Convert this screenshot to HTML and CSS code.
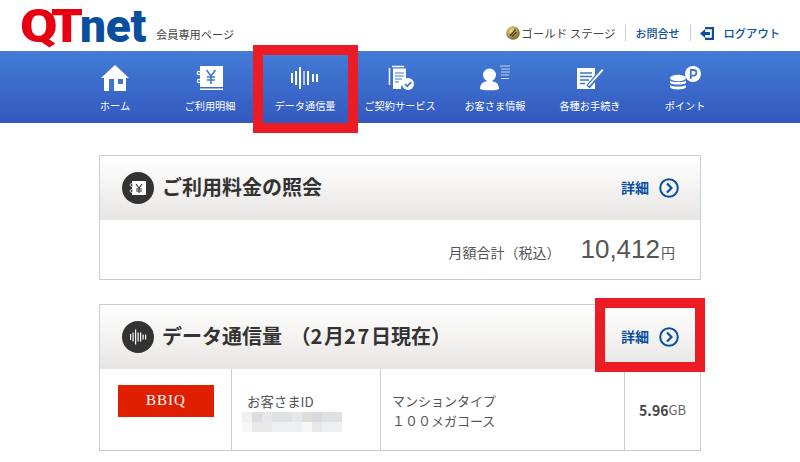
FILE: index.html
```html
<!DOCTYPE html>
<html lang="ja">
<head>
<meta charset="utf-8">
<title>QTnet 会員専用ページ</title>
<link rel="stylesheet" href="styles.css">
</head>
<body>
<header class="top">
  <div class="brand">
    <div class="logo"><span class="logo-q">Q</span><span class="logo-t">T</span><span class="logo-net">net</span></div>
    <span class="brand-sub">会員専用ページ</span>
  </div>
  <div class="util">
    <span class="stage">
      <svg class="coin" viewBox="0 0 14 14"><defs><radialGradient id="g" cx=".4" cy=".35" r=".7"><stop offset="0" stop-color="#f0dc8c"/><stop offset=".6" stop-color="#a8924c"/><stop offset="1" stop-color="#6d5f2c"/></radialGradient></defs><circle cx="7" cy="7" r="6.800" fill="url(#g)"/><path d="M4 10 9.500 3.500M6 10.500 10.500 6" stroke="#4a4020" stroke-width="1.300" fill="none"/></svg>
      <span>ゴールド ステージ</span>
    </span>
    <a class="util-link contact">お問合せ</a>
    <a class="util-link logout">
      <svg class="logout-icon" viewBox="0 0 15 15"><path d="M5 1h9v13H5v-2.200h6.800V3.200H5z" fill="#0a4f9e"/><path d="M0 7.500 5.200 3v3H10v3H5.200v3z" fill="#0a4f9e"/></svg>
      <span>ログアウト</span>
    </a>
  </div>
</header>

<nav class="nav">
  <a class="nav-item">
    <svg class="nav-icon" viewBox="0 0 32 26"><path d="M16 0 30 13h-3v13H5V13H2z" fill="#fff"/><path d="M10 14h5v12h-5zM19 14h5v5h-5z" fill="#3f74cf"/></svg>
    <span>ホーム</span>
  </a>
  <a class="nav-item">
    <svg class="nav-icon" viewBox="0 0 32 26"><path d="M6 1h23v21H6z" fill="#fff"/><path d="M6 23.500h23v1.500H6z" fill="#fff"/><path d="M12.500 5l4.500 6 4.500-6M17 11v8M13 12h8M13 15h8" stroke="#3f74cf" stroke-width="1.600" fill="none"/><g fill="none" stroke="#fff" stroke-width="1.200"><circle cx="5" cy="8" r="1.700" fill="#3f74cf"/><circle cx="5" cy="16" r="1.700" fill="#3f74cf"/></g></svg>
    <span>ご利用明細</span>
  </a>
  <a class="nav-item">
    <svg class="nav-icon" viewBox="0 0 32 26"><g fill="#fff"><rect x="2" y="8" width="2" height="10"/><rect x="6" y="6" width="2" height="14"/><rect x="10" y="2" width="2" height="22"/><rect x="14" y="6" width="2" height="14" opacity=".6"/><rect x="18" y="6" width="2" height="14"/><rect x="23" y="9" width="2" height="8"/><rect x="27" y="9" width="2" height="8"/></g></svg>
    <span>データ通信量</span>
  </a>
  <a class="nav-item">
    <svg class="nav-icon" viewBox="0 0 32 26"><g fill="none" stroke="#fff"><path d="M5.500 3v17" stroke-width="1.500"/><path d="M8 1.500h12" stroke-width="1.500"/></g><path d="M9 3.500h13v13.500a7 7 0 0 0-5 7h-8z" fill="#fff"/><g stroke="#3f74cf" stroke-width="1.200"><path d="M11 8h9M11 11h9M11 14h7M11 17h4"/></g><circle cx="24" cy="19" r="6" fill="#fff"/><path d="M21 19l2.200 2.200 4-4" stroke="#3f74cf" stroke-width="1.700" fill="none"/></svg>
    <span>ご契約サービス</span>
  </a>
  <a class="nav-item">
    <svg class="nav-icon" viewBox="0 0 32 26"><circle cx="10.500" cy="10" r="6.500" fill="#fff"/><path d="M1 24c0-6 4-8 9.500-8S20 18 20 24c-2 1.800-17 1.800-19 0z" fill="#fff"/><path d="M21 1h10M22 4h9M22 7h9M22 10h8M22 13.500h8" stroke="#c3d3f0" stroke-width="1.200"/></svg>
    <span>お客さま情報</span>
  </a>
  <a class="nav-item">
    <svg class="nav-icon" viewBox="0 0 32 26"><path d="M3 3h18v21H3z" fill="#fff"/><path d="M6 8h12M6 11.500h12M6 15h9M6 18.500h5" stroke="#3f74cf" stroke-width="1.500"/><path d="M14 22 28 5" stroke="#3f74cf" stroke-width="4.500"/><path d="M13.500 21.500 15 19l13-15 1.500 1.300-13.500 15z" fill="#fff"/></svg>
    <span>各種お手続き</span>
  </a>
  <a class="nav-item">
    <svg class="nav-icon" viewBox="0 0 32 26"><circle cx="24" cy="9" r="8" fill="#fff"/><path d="M21.800 14V5h2.800a2.800 2.800 0 0 1 0 5.600h-2.800" fill="none" stroke="#3f74cf" stroke-width="1.800"/><g fill="#fff"><ellipse cx="9" cy="13" rx="8" ry="3.200"/><path d="M1 15.500c2 2 14 2 16 0v2.500c-2 2-14 2-16 0z"/><path d="M1 20c2 2 14 2 16 0v2.500c-2 2.500-14 2.500-16 0z"/></g></svg>
    <span>ポイント</span>
  </a>
</nav>

<main class="content">
  <section class="panel">
    <div class="panel-head">
      <h2 class="panel-title">
        <span class="round-icon">
          <svg viewBox="0 0 20 20"><path d="M4 3h14v14H4z" fill="#fff"/><path d="M8 6l3 4 3-4M11 10v5M8 11h6M8 13h6" stroke="#333" stroke-width="1.100" fill="none"/><circle cx="3.500" cy="7" r="1.400" fill="#333" stroke="#fff" stroke-width=".8"/><circle cx="3.500" cy="13" r="1.400" fill="#333" stroke="#fff" stroke-width=".8"/></svg>
        </span>
        <span class="title-text">ご利用料金の照会</span>
      </h2>
      <a class="detail"><span class="detail-text">詳細</span>
        <svg class="arrow" viewBox="0 0 20 20"><circle cx="10" cy="10" r="8.800" fill="none" stroke="#0a4f9e" stroke-width="2"/><path d="M8 5.500 12.500 10 8 14.500" fill="none" stroke="#0a4f9e" stroke-width="2.200"/></svg>
      </a>
    </div>
    <div class="total">
      <span class="total-label">月額合計（税込）</span>
      <span class="total-value">10,412</span><span class="total-unit">円</span>
    </div>
  </section>

  <section class="panel">
    <div class="panel-head">
      <h2 class="panel-title">
        <span class="round-icon">
          <svg viewBox="0 0 20 20"><g fill="#fff"><rect x="2" y="7" width="1.200" height="6"/><rect x="4.500" y="5.500" width="1.200" height="9"/><rect x="7" y="2.500" width="1.200" height="15"/><rect x="9.500" y="5.500" width="1.200" height="9"/><rect x="12" y="5.500" width="1.200" height="9"/><rect x="14.500" y="7.500" width="1.200" height="5"/><rect x="17" y="7.500" width="1.200" height="5"/></g></svg>
        </span>
        <span class="title-text">データ通信量 （<span class="num">2</span>月<span class="num">27</span>日現在）</span>
      </h2>
      <a class="detail"><span class="detail-text">詳細</span>
        <svg class="arrow" viewBox="0 0 20 20"><circle cx="10" cy="10" r="8.800" fill="none" stroke="#0a4f9e" stroke-width="2"/><path d="M8 5.500 12.500 10 8 14.500" fill="none" stroke="#0a4f9e" stroke-width="2.200"/></svg>
      </a>
    </div>
    <div class="usage">
      <div class="cell cell-brand"><span class="bbiq">BBIQ</span></div>
      <div class="cell cell-id">
        <span class="id-label">お客さまID</span>
        <svg class="mosaic" viewBox="0 0 100 20" shape-rendering="crispEdges"><rect width="100" height="10" fill="#e6e7e9"/><rect y="10" width="100" height="10" fill="#eeeff0"/><rect width="10" height="10" fill="#f0f0f1"/><rect x="10" width="10" height="10" fill="#dcdddf"/><rect x="30" width="20" height="10" fill="#dfe2e5"/><rect x="60" width="10" height="10" fill="#dedddc"/><rect x="70" width="10" height="10" fill="#d9dadd"/><rect x="80" width="20" height="10" fill="#dfe0e3"/><rect y="10" width="10" height="10" fill="#f7f7f7"/><rect x="10" y="10" width="20" height="10" fill="#e9e9e8"/><rect x="60" y="10" width="10" height="10" fill="#f7f7f7"/><rect x="70" y="10" width="10" height="10" fill="#e6e7e8"/></svg>
      </div>
      <div class="cell cell-plan">マンションタイプ<br>１００メガコース</div>
      <div class="cell cell-amount"><b>5.96</b><small>GB</small></div>
    </div>
  </section>
</main>

<div class="mark mark-nav"></div>
<div class="mark mark-detail"></div>
</body>
</html>
```

FILE: styles.css
```css
* { box-sizing: border-box; }
html, body { margin: 0; padding: 0; }
body {
  position: relative;
  width: 800px;
  height: 462px;
  overflow: hidden;
  background: #fff;
  color: #444;
  font-family: "Noto Sans CJK JP", "Noto Sans", "Liberation Sans", sans-serif;
}
a { color: inherit; text-decoration: none; }

.top {
  height: 51px;
  display: flex;
  justify-content: space-between;
  align-items: flex-end;
  padding: 0 20px;
}
.brand { display: flex; align-items: flex-end; height: 51px; }
.logo {
  display: flex;
  width: 126px;
  height: 51px;
  font-family: Roboto, "Liberation Sans", sans-serif;
  font-weight: 900;
  font-size: 46px;
  line-height: 52px;
  white-space: nowrap;
}
.logo-q { color: #e60012; transform: scaleX(1.18); transform-origin: left center; margin-right: 0; width: 31px; }
.logo-t { color: #e60012; transform: scaleX(1.1); transform-origin: left center; width: 29px; }
.logo-net { color: #0a4f9e; letter-spacing: -.3px; }
.brand-sub { font-size: 11.200px; line-height: 16px; margin: 0 0 9px 10px; color: #444; }

.util { display: flex; align-items: center; height: 24px; margin-bottom: 6px; font-size: 11.500px; line-height: 16px; }
.stage { display: flex; align-items: center; gap: 1px; white-space: nowrap; padding-right: 9px; border-right: 1px solid #c3cbdb; height: 16px; }
.coin { width: 14px; height: 14px; }
.util-link { color: #0a4f9e; font-weight: 500; white-space: nowrap; }
.contact { font-size: 11px; padding: 0 10px; border-right: 1px solid #c3cbdb; height: 16px; }
.logout { display: flex; align-items: center; gap: 9px; padding-left: 9px; font-size: 11.300px; }
.logout-icon { width: 15px; height: 15px; }

.nav {
  height: 72px;
  display: flex;
  justify-content: center;
  background: linear-gradient(#437cd6, #3359bf);
  color: #fff;
}
.nav-item {
  width: 95px;
  display: flex;
  flex-direction: column;
  align-items: center;
  padding-top: 14px;
  font-size: 10.200px;
  line-height: 14px;
  white-space: nowrap;
}
.nav-icon { width: 32px; height: 26px; margin-bottom: 8px; display: block; }

.content { padding: 32px 99px 0; display: flex; flex-direction: column; gap: 24px; }
.panel { border: 1px solid #c8ccd9; background: #fff; }
.panel-head {
  height: 64px;
  display: flex;
  align-items: center;
  justify-content: space-between;
  padding: 0 21px 0 22px;
  background: linear-gradient(#fff, #e8e6e4);
}
.panel-title {
  margin: 0;
  display: flex;
  align-items: center;
  gap: 8px;
  font-size: 20px;
  font-weight: 700;
  color: #333;
  line-height: 24px;
  white-space: nowrap;
}
.title-text { position: relative; top: -1px; word-spacing: 4px; }
.num { letter-spacing: 1.700px; }
.round-icon {
  width: 32px;
  height: 32px;
  border-radius: 50%;
  background: #333;
  display: flex;
  align-items: center;
  justify-content: center;
}
.round-icon svg { width: 20px; height: 20px; }
.detail {
  display: flex;
  align-items: center;
  gap: 10px;
  color: #0a4f9e;
  font-size: 14px;
  font-weight: 700;
  white-space: nowrap;
}
.detail-text { position: relative; top: -1px; }
.arrow { width: 20px; height: 20px; }

.total {
  height: 59px;
  display: flex;
  align-items: baseline;
  justify-content: flex-end;
  padding: 13px 25px 0 0;
  color: #555;
  line-height: 32px;
}
.total-label { font-size: 14px; margin-right: 20px; }
.total-value { font-family: "Liberation Sans", sans-serif; font-size: 26px; }
.total-unit { font-size: 14px; margin-left: 1px; }

.usage { display: grid; grid-template-columns: 132px 149px 244px 75px; height: 81px; }
.cell { border-right: 1px solid #c8ccd9; font-size: 13px; line-height: 20px; color: #555; }
.cell:last-child { border-right: 0; }
.cell-brand { padding: 16px 0 0 18px; }
.bbiq {
  display: block;
  width: 96px;
  height: 32px;
  background: #e01f00;
  color: #fff;
  font-family: "Liberation Serif", serif;
  font-size: 15px;
  line-height: 30px;
  letter-spacing: 1px;
  text-align: center;
}
.cell-id { padding: 22px 0 0 10px; }
.id-label { display: block; padding-left: 5px; font-size: 13.400px; }
.mosaic { display: block; width: 100px; height: 20px; margin-top: 1px; }
.cell-plan { padding: 22px 0 0 11px; }
.cell-amount { display: flex; align-items: center; justify-content: center; color: #444; }
.cell-amount b { font-size: 14px; }
.cell-amount small { font-size: 13px; color: #666; }

.mark { position: absolute; border: 10px solid #ed1c24; }
.mark-nav { left: 253px; top: 45px; width: 105px; height: 88px; }
.mark-detail { left: 595px; top: 298px; width: 110px; height: 74px; }
```
